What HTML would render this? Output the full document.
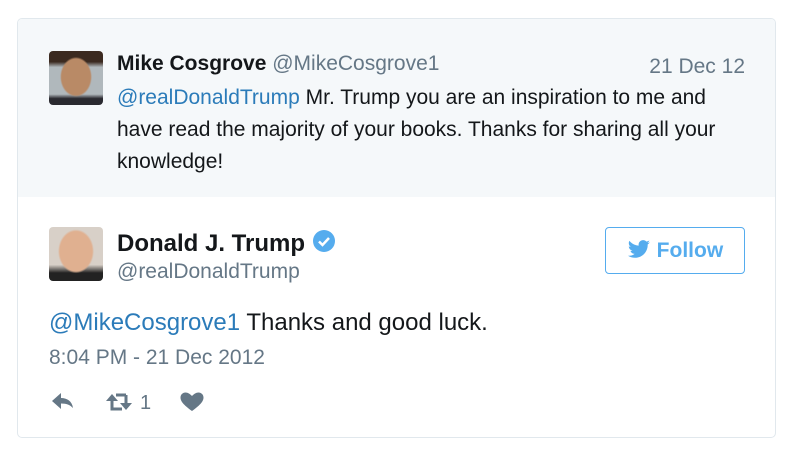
<!DOCTYPE html>
<html><head><style>
body{margin:0;width:798px;height:457px;background:#fff;font-family:"Liberation Sans",sans-serif;position:relative;overflow:hidden}
.card{position:absolute;left:17px;top:18px;width:757px;height:418px;border:1px solid #e1e8ed;border-radius:5px;overflow:hidden;background:#fff}
.top{position:absolute;left:0;top:0;width:100%;height:178px;background:#f5f8fa}
.a{position:absolute}
.av{position:absolute;width:54px;height:54px;border-radius:4px}
.blue{color:#2b7bb9}
</style></head><body>
<div class="card">
<div class="top"></div>
<div class="av" style="left:31px;top:32px;background:radial-gradient(ellipse 16px 20px at 50% 48%,#b98a66 0,#b98a66 90%,transparent 100%),linear-gradient(#3b2a20 0,#3b2a20 20%,#b0b8bc 30%,#b0b8bc 80%,#2a2a30 88%);"></div>
<div class="a" style="left:99px;top:33px;font-size:21px;color:#14171a;white-space:nowrap"><b>Mike Cosgrove</b> <span style="color:#657786">@MikeCosgrove1</span></div>
<div class="a" style="right:30px;top:36px;font-size:21px;color:#657786">21 Dec 12</div>
<div class="a" style="left:99px;top:63px;width:630px;font-size:21px;line-height:32px;color:#14171a"><span class="blue">@realDonaldTrump</span> Mr. Trump you are an inspiration to me and have read the majority of your books. Thanks for sharing all your knowledge!</div>

<div class="av" style="left:31px;top:208px;background:radial-gradient(ellipse 18px 22px at 50% 45%,#e0b090 0,#e0b090 90%,transparent 100%),linear-gradient(#d8d0c8 0,#d8d0c8 70%,#222 85%);"></div>
<div class="a" style="left:99px;top:210px;font-size:24px;font-weight:bold;color:#14171a">Donald J. Trump
<svg width="24" height="24" viewBox="0 0 24 24" style="vertical-align:-2px"><circle cx="12" cy="12" r="11" fill="#55acee"/><path d="M7 12.5l3.5 3.5 6.5-7" stroke="#fff" stroke-width="2.5" fill="none"/></svg></div>
<div class="a" style="left:99px;top:241px;font-size:21px;color:#657786">@realDonaldTrump</div>
<div class="a" style="left:587px;top:208px;width:140px;height:47px;border:1px solid #55acee;border-radius:4px;box-sizing:border-box;color:#55acee;font-size:21px;font-weight:bold;line-height:45px;text-align:center">
<svg width="24" height="20" viewBox="0 0 24 20" style="vertical-align:-3px"><path d="M23 2.3c-.8.4-1.7.6-2.6.7.9-.6 1.6-1.4 2-2.5-.9.5-1.9.9-2.9 1.1C18.6.7 17.4.1 16.1.1c-2.5 0-4.5 2-4.5 4.5 0 .4 0 .7.1 1C7.9 5.4 4.6 3.6 2.4.9c-.4.7-.6 1.4-.6 2.3 0 1.6.8 2.9 2 3.7-.7 0-1.4-.2-2-.6 0 2.2 1.6 4 3.6 4.4-.4.1-.8.2-1.2.2-.3 0-.6 0-.8-.1.6 1.8 2.2 3.1 4.2 3.1-1.5 1.2-3.5 1.9-5.6 1.9H1c2 1.3 4.4 2 6.9 2 8.3 0 12.8-6.9 12.8-12.8v-.6c.9-.6 1.7-1.4 2.3-2.3z" fill="#55acee"/></svg> Follow</div>
<div class="a" style="left:31px;top:290px;font-size:24px;color:#14171a;white-space:nowrap"><span class="blue">@MikeCosgrove1</span> Thanks and good luck.</div>
<div class="a" style="left:31px;top:327px;font-size:21px;color:#657786">8:04 PM - 21 Dec 2012</div>
<svg class="a" style="left:31px;top:370px" width="160" height="26" viewBox="0 0 160 26">
<path d="M3 12l9-8v5c6 0 11 3 12 10-3-3-6-4.5-12-4.5V20z" fill="#657786"/>
<g fill="none" stroke="#657786" stroke-width="3"><path d="M63 10V20H73"/><path d="M77 6V16"/><path d="M67 6H77"/></g>
<path d="M57 12l6-7 6 7z" fill="#657786"/><path d="M71 14l6 7 6-7z" fill="#657786"/>
<text x="91" y="20" font-size="20" fill="#657786" font-family="Liberation Sans">1</text>
<path d="M143 22c-9-6.5-11.5-10-11.5-13.5 0-2.8 2.2-5 5-5 2.5 0 4.5 1.5 6.5 3.5 2-2 4-3.5 6.5-3.5 2.8 0 5 2.2 5 5 0 3.5-2.5 7-11.5 13.5z" fill="#657786"/>
</svg>
</div>
</body></html>
